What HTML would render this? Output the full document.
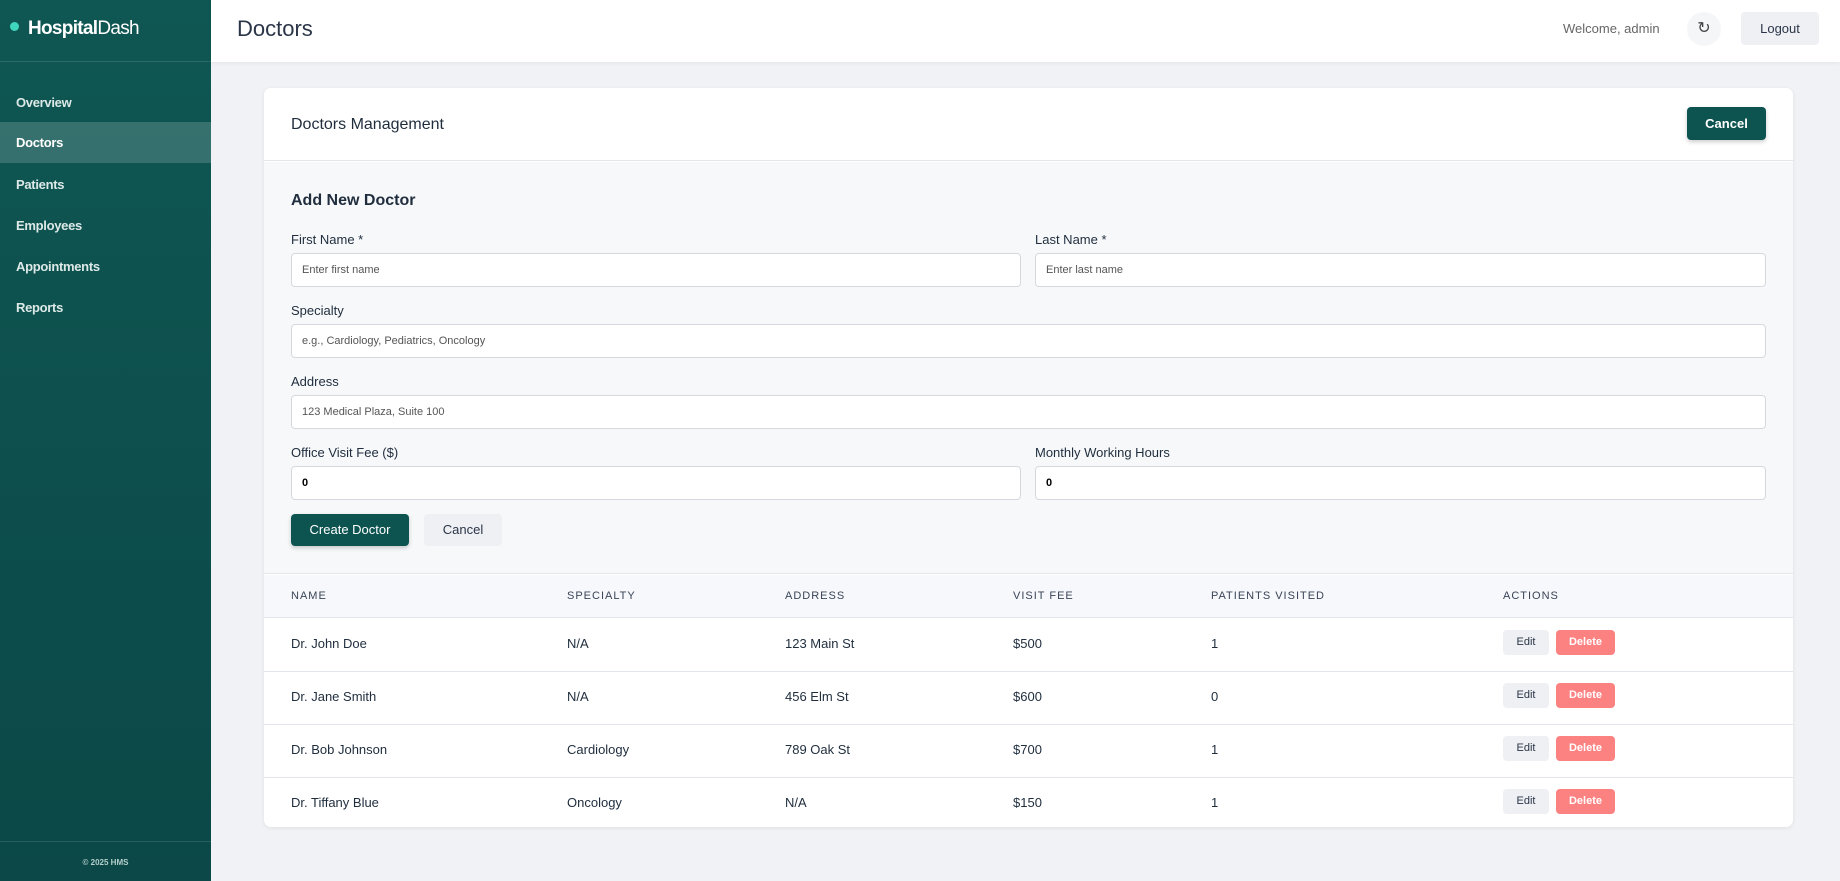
<!DOCTYPE html>
<html><head><meta charset="utf-8"><style>
*{box-sizing:border-box;margin:0;padding:0}
body{width:1840px;height:881px;overflow:hidden;background:#f0f2f5;font-family:"Liberation Sans",sans-serif;color:#1f2d3d;position:relative}
.sb{position:absolute;left:0;top:0;width:211px;height:881px;background:linear-gradient(#0f5753,#0b4847)}
.logo{position:absolute;left:10px;top:18px;color:#fff;font-size:19px;letter-spacing:-0.7px}
.logo i{display:inline-block;width:9px;height:9px;border-radius:50%;background:#3fd6bd;margin-right:9px;vertical-align:3px}
.sb .line{position:absolute;left:0;width:211px;height:1px;background:rgba(255,255,255,.12)}
.nav{position:absolute;left:0;width:211px;height:41px;line-height:41px;padding-left:16px;color:#dce9e7;font-weight:bold;font-size:13px;letter-spacing:-0.3px}
.nav.act{background:rgba(255,255,255,.17);color:#fff}
.foot{position:absolute;left:0;width:211px;top:858px;text-align:center;font-size:8px;color:#b5cfcc;font-weight:bold}
.top{position:absolute;left:211px;top:0;right:0;height:62px;background:#fff;box-shadow:0 1px 4px rgba(0,0,0,.06)}
.top h1{position:absolute;left:26px;top:16px;font-size:22px;font-weight:normal;color:#2b3548}
.wel{position:absolute;left:1352px;top:21px;font-size:13px;color:#666}
.ref{position:absolute;left:1476px;top:12px;width:34px;height:34px;border-radius:50%;background:#f5f6f8;text-align:center;line-height:34px;font-size:16px;color:#444}
.lo{position:absolute;left:1530px;top:12px;width:78px;height:33px;border-radius:4px;background:#eef0f4;text-align:center;line-height:33px;font-size:13px;color:#2b3548}
.card{position:absolute;left:264px;top:88px;width:1529px;height:739px;background:#fff;border-radius:7px;box-shadow:0 1px 4px rgba(0,0,0,.08);overflow:hidden}
.ch{height:73px;border-bottom:1px solid #e2e6ea;position:relative}
.ch h2{position:absolute;left:27px;top:28px;font-size:16px;font-weight:normal;color:#1f2d3d}
.btn{position:absolute;background:#0d5451;color:#fff;border-radius:4px;text-align:center;font-size:13px;box-shadow:0 2px 4px rgba(0,0,0,.2)}
.form{position:absolute;left:0;top:74px;width:1529px;height:412px;background:#f7f8fa;border-bottom:1px solid #e2e6ea}
.lbl{position:absolute;font-size:13px;color:#1f2d3d}
.inp{position:absolute;height:34px;background:#fff;border:1px solid #d5d9de;border-radius:4px;font-size:11px;color:#555;line-height:32px;padding-left:10px}
.th{position:absolute;left:0;top:487px;width:1529px;height:43px;background:#f6f8fb;border-bottom:1px solid #e2e6ea}
.th span{position:absolute;top:15px;font-size:11px;letter-spacing:1px;color:#3a4456}
.row{position:absolute;left:0;width:1529px;height:53px;border-bottom:1px solid #e2e6ea}
.row span{position:absolute;top:17px;font-size:13px;color:#1f2d3d}
.ed{position:absolute;left:1239px;top:11px;width:46px;height:25px;border-radius:4px;background:#eef0f4;font-size:11px;text-align:center;line-height:25px;color:#2b3548}
.de{position:absolute;left:1292px;top:11px;width:59px;height:25px;border-radius:4px;background:#fc8181;font-size:11px;text-align:center;line-height:25px;color:#fff;font-weight:bold}
</style></head><body>
<div class="sb">
<div class="logo"><i></i><b>Hospital</b>Dash</div>
<div class="line" style="top:61px"></div>
<div class="nav" style="top:82px">Overview</div>
<div class="nav act" style="top:122px">Doctors</div>
<div class="nav" style="top:164px">Patients</div>
<div class="nav" style="top:205px">Employees</div>
<div class="nav" style="top:246px">Appointments</div>
<div class="nav" style="top:287px">Reports</div>
<div class="line" style="top:841px"></div>
<div class="foot">© 2025 HMS</div>
</div>
<div class="top"><h1>Doctors</h1><div class="wel">Welcome, admin</div><div class="ref">↻</div><div class="lo">Logout</div></div>
<div class="card">
<div class="ch"><h2>Doctors Management</h2><div class="btn" style="left:1423px;top:19px;width:79px;height:33px;line-height:33px;font-weight:bold">Cancel</div></div>
<div class="form">
<div class="lbl" style="left:27px;top:30px;font-size:16px;font-weight:bold">Add New Doctor</div>
<div class="lbl" style="left:27px;top:70px">First Name *</div>
<div class="lbl" style="left:771px;top:70px">Last Name *</div>
<div class="inp" style="left:27px;top:91px;width:730px">Enter first name</div>
<div class="inp" style="left:771px;top:91px;width:731px">Enter last name</div>
<div class="lbl" style="left:27px;top:141px">Specialty</div>
<div class="inp" style="left:27px;top:162px;width:1475px">e.g., Cardiology, Pediatrics, Oncology</div>
<div class="lbl" style="left:27px;top:212px">Address</div>
<div class="inp" style="left:27px;top:233px;width:1475px">123 Medical Plaza, Suite 100</div>
<div class="lbl" style="left:27px;top:283px">Office Visit Fee ($)</div>
<div class="lbl" style="left:771px;top:283px">Monthly Working Hours</div>
<div class="inp" style="left:27px;top:304px;width:730px;color:#000;font-weight:bold">0</div>
<div class="inp" style="left:771px;top:304px;width:731px;color:#000;font-weight:bold">0</div>
<div class="btn" style="left:27px;top:352px;width:118px;height:32px;line-height:32px">Create Doctor</div>
<div style="position:absolute;left:160px;top:352px;width:78px;height:32px;line-height:32px;border-radius:4px;background:#eef0f4;text-align:center;font-size:13px;color:#2b3548">Cancel</div>
</div>
<div class="th"><span style="left:27px">NAME</span><span style="left:303px">SPECIALTY</span><span style="left:521px">ADDRESS</span><span style="left:749px">VISIT FEE</span><span style="left:947px">PATIENTS VISITED</span><span style="left:1239px">ACTIONS</span></div>
<div class="row" style="top:531px"><span style="left:27px">Dr. John Doe</span><span style="left:303px">N/A</span><span style="left:521px">123 Main St</span><span style="left:749px">$500</span><span style="left:947px">1</span><div class="ed">Edit</div><div class="de">Delete</div></div>
<div class="row" style="top:584px"><span style="left:27px">Dr. Jane Smith</span><span style="left:303px">N/A</span><span style="left:521px">456 Elm St</span><span style="left:749px">$600</span><span style="left:947px">0</span><div class="ed">Edit</div><div class="de">Delete</div></div>
<div class="row" style="top:637px"><span style="left:27px">Dr. Bob Johnson</span><span style="left:303px">Cardiology</span><span style="left:521px">789 Oak St</span><span style="left:749px">$700</span><span style="left:947px">1</span><div class="ed">Edit</div><div class="de">Delete</div></div>
<div class="row" style="top:690px;border-bottom:none"><span style="left:27px">Dr. Tiffany Blue</span><span style="left:303px">Oncology</span><span style="left:521px">N/A</span><span style="left:749px">$150</span><span style="left:947px">1</span><div class="ed">Edit</div><div class="de">Delete</div></div>
</div>
</body></html>
